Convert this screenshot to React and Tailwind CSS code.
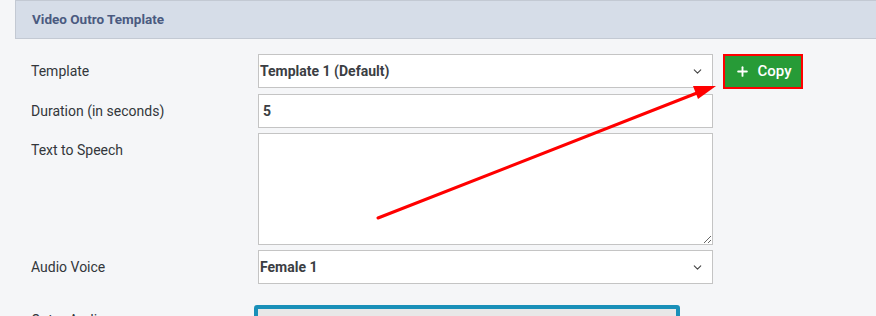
import { ChevronDown, Plus } from "lucide-react";

function Row({ label, children }) {
  return (
    <div className="flex items-start">
      <div className="w-[243px] shrink-0 h-[34px] flex items-center pl-[16px] text-[14px] text-[#33363b]">
        {label}
      </div>
      {children}
    </div>
  );
}

function Select({ value }) {
  return (
    <div className="w-[455px] h-[34px] bg-white border border-[#c4c4c4] flex items-center justify-between pr-[8px] pl-[1px]">
      <span className="text-[14px] font-bold text-[#3b3e43]">{value}</span>
      <ChevronDown className="w-[13px] h-[13px] text-[#444]" strokeWidth={2} />
    </div>
  );
}

export default function App() {
  return (
    <div
      className="relative w-[876px] h-[316px] overflow-hidden bg-[#f5f6f8] pl-[15px]"
      style={{ fontFamily: "Roboto, 'Liberation Sans', sans-serif" }}
    >
      <div className="h-[39px] border border-r-0 border-[#c3c9d3] bg-[#d6dde8] flex items-center pl-[16px]">
        <span className="text-[13.5px] font-bold text-[#4a5a80]">Video Outro Template</span>
      </div>

      <div className="mt-[15px] flex flex-col gap-[5px]">
        <Row label="Template">
          <Select value="Template 1 (Default)" />
          <button className="ml-[10px] w-[80px] h-[35px] border-2 border-[#ff0000] bg-[#279b37] flex items-center justify-center gap-[8px] text-white text-[15px] font-medium">
            <Plus className="w-[15px] h-[15px]" strokeWidth={3} />
            Copy
          </button>
        </Row>
        <Row label="Duration (in seconds)">
          <div className="w-[455px] h-[34px] bg-white border border-[#c4c4c4] flex items-center pl-[4px]">
            <span className="text-[14px] font-bold text-[#3b3e43]">5</span>
          </div>
        </Row>
        <Row label="Text to Speech">
          <textarea className="w-[455px] h-[112px] bg-white border border-[#c4c4c4] outline-none block" />
        </Row>
        <Row label="Audio Voice">
          <Select value="Female 1" />
        </Row>
        <div className="flex items-start mt-[16px]">
          <div className="w-[239px] shrink-0 pl-[16px] pt-[5px] leading-[20px] text-[14px] text-[#33363b]">
            Outro Audio
          </div>
          <div className="w-[426px] h-[40px] border-[4px] border-[#1a90b9] rounded-[3px] bg-[#e8e8e8]" />
        </div>
      </div>

      <svg className="absolute left-0 top-0 pointer-events-none" width="876" height="316">
        <line x1="378" y1="218" x2="697" y2="93" stroke="#ff0000" strokeWidth="3" strokeLinecap="round" />
        <polygon points="716,86 693,86 698,99" fill="#ff0000" />
      </svg>
    </div>
  );
}
